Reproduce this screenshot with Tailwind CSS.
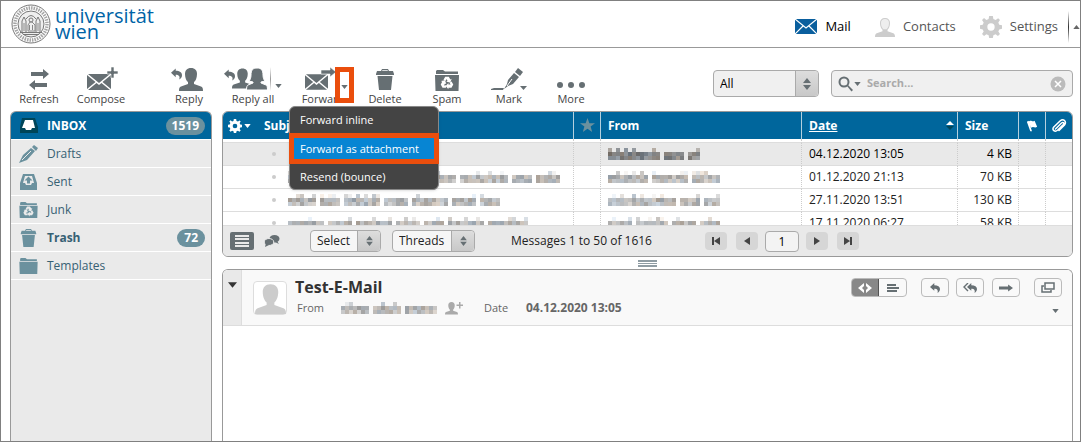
<!DOCTYPE html>
<html lang="en">
<head>
<meta charset="utf-8">
<meta name="viewport" content="width=device-width, initial-scale=1">
<title>Mail :: INBOX</title>
<script src="https://cdn.jsdelivr.net/npm/@tailwindcss/browser@4"></script>
</head>
<body class="bg-white font-['Open_Sans','Noto_Sans',sans-serif] text-xs text-[#222]">
<svg class="hidden" aria-hidden="true">
  <symbol id="person" viewBox="0 0 24 24"><path d="M12 1c4 0 6 2.500 6 6 0 4-1.500 7-3 8v2l7 2.500c1.300.5 2 1.500 2 4.500H0c0-3 .7-4 2-4.500L9 17v-2c-1.500-1-3-4-3-8 0-3.500 2-6 6-6z"/></symbol>
  <symbol id="envelope" viewBox="0 0 24 16"><path d="M1 0h22L12 9zM0 1l8.500 7L0 15zM24 1l-8.500 7L24 15zM9.500 9L12 11l2.500-2L23 16H1z"/></symbol>
  <symbol id="trash" viewBox="0 0 18 21"><path d="M6 0h6l1 2h4l1 3v1H0V5l1-3h4zM6.500 1.200L6 2h6l-.5-.8zM1.500 7h15L15 21H3z"/></symbol>
  <symbol id="folder" viewBox="0 0 24 21"><path d="M1 1l1-1h6l2 1.500h13V4H1zM0 5h24l-.5 16H.5z"/></symbol>
  <symbol id="recycle" viewBox="-8 -8 16 16"><g id="rarrow"><path d="M-3.500-3.200L-1.800-6.200h3.600L3.400-3.600l1.300-.7L3.300-.4-.8-1.200l1.300-.7-1-2L-1.500-2z"/></g><use href="#rarrow" transform="rotate(120)"/><use href="#rarrow" transform="rotate(240)"/></symbol>
  <symbol id="reply" viewBox="0 0 14 14"><path d="M6 0v3c5 0 8 2 8 5.500 0 2.500-1.500 4.500-3.500 5.500 1.300-4-.5-6-4.500-6v3L0 5.500z"/></symbol>
  <symbol id="right" viewBox="0 0 20 10"><path d="M0 3h13V0l7 5-7 5V7H0z"/></symbol>
  <symbol id="down" viewBox="0 0 8 5"><path d="M0 0h8L4 5z"/></symbol>
  <symbol id="updown" viewBox="0 0 8 12"><path d="M4 0l4 5H0zM0 7h8l-4 5z"/></symbol>
  <symbol id="gear" viewBox="-12 -12 24 24"><path fill-rule="evenodd" d="M-2-12h4l.6 3.300 2.500 1L7.800-9.600l2 2L8-5l1 2.500 3 .5v4l-3 .6L8 5l1.800 2.600-2.200 2.200L5 8 2.600 9 2 12h-4l-.6-3L-5 8l-2.600 1.800-2.200-2.200L-8 5l-1-2.400-3-.6v-4l3-.5L-8-5l-1.800-2.600 2.200-2.200L-5-7.700l2.400-1zM0-4a4 4 0 100 8 4 4 0 000-8z"/></symbol>
  <linearGradient id="silver" x1="0" y1="0" x2="0" y2="1"><stop offset="0" stop-color="#eee"/><stop offset="1" stop-color="#b8b8b8"/></linearGradient>
</svg>

<div class="flex min-h-screen flex-col border border-[#808080]">
  <header class="flex h-[47px] shrink-0 items-center border-b border-[#999] pl-2.5">
    <a href="#" class="flex items-center gap-[4px] text-[#0063a6]" aria-label="universität wien">
      <svg class="size-10" viewBox="-20 -20 40 40" fill="none" stroke="#777">
        <circle r="19" stroke-width="1"/><circle r="16" stroke-width="3.500" stroke="#a5a5a5" stroke-dasharray="1.500 1"/><circle r="13" fill="#eee"/>
        <path d="M-9 8V-3l2-4 2 4V8M9 8V-3L7-7 5-3V8M-5-5Q0-12 5-5M-11 8.500H11M-8 10.500H8" />
        <circle cy="-4" r="2"/><path d="M-3 7V1l2-3h2l3 3v6zM-1.500 1v5M1.500 1v5M-7-1v8M7-1v8" stroke="#888"/>
      </svg>
      <span class="text-[20px] leading-4 font-medium">universität<br>wien</span>
    </a>
    <nav class="mt-1.5 ml-auto flex items-center text-[13px] text-[#555]">
      <a href="#" class="flex items-center gap-2 text-black"><svg class="h-[15px] w-[22px]" viewBox="0 0 22 15"><path fill="#0a5f9e" d="M0 0h22v15H0z"/><path d="M0 0l11 9L22 0M0 15l8-8M22 15l-8-8" fill="none" stroke="#fff" stroke-width="1.200"/></svg>Mail</a>
      <a href="#" class="ml-6 flex items-center gap-2"><svg class="size-5" fill="url(#silver)" viewBox="0 0 20 20"><path fill="#ccc" d="M10 1c3.300 0 5 2 5 5 0 3.300-1.200 5.800-2.500 6.700v1.600l5.800 2c1.100.5 1.700 1.300 1.700 3.700H0c0-2.400.6-3.200 1.700-3.700l5.800-2v-1.600C6.200 11.800 5 9.300 5 6c0-3 1.700-5 5-5z"/><path fill="#eee" d="M10 2c2.500 0 4 1.500 4 4 0 3-1.200 5.500-2.500 6.200h-3C7.200 11.500 6 9 6 6c0-2.500 1.500-4 4-4z"/></svg>Contacts</a>
      <a href="#" class="ml-6 flex items-center gap-2"><svg class="size-[22px]" fill="#ccc"><use href="#gear"/></svg>Settings</a>
      <button aria-label="Hide header" class="ml-2.5 flex items-center gap-1"><span class="h-8 w-px bg-linear-to-b from-white via-[#333] to-white"></span><svg class="h-[4px] w-[7px] rotate-180" fill="#666"><use href="#down"/></svg></button>
    </nav>
  </header>

  <div class="relative z-10 flex h-[63px] shrink-0 items-start pt-[18px] pr-[7px] pl-[7px] text-[11px] leading-[14px] text-[#444] [&_svg]:fill-[#666f73]">
    <button class="flex w-[62px] flex-col items-center"><svg class="h-[26px] w-7" viewBox="0 0 28 26"><path d="M6 6h12V3l6 5-6 5v-3H6zM22 17H10v-3l-6 5 6 5v-3h12z"/></svg>Refresh</button>
    <button class="flex w-[62px] flex-col items-center"><svg class="h-[26px] w-9" viewBox="0 0 36 26"><use href="#envelope" x="4" y="8" width="24" height="16"/><path d="M28 1h3v4h4v3h-4v4h-3V8h-4V5h4z" stroke="#fff" stroke-width=".6"/></svg>Compose</button>
    <button class="ml-[26px] flex w-[62px] flex-col items-center"><svg class="h-[26px] w-9" viewBox="0 0 36 26"><use href="#reply" x="0" y="2" width="11" height="12"/><use href="#person" x="8" y="1" width="24" height="24"/></svg>Reply</button>
    <div class="ml-[2px] flex w-[70px]">
      <button class="flex w-[62px] flex-col items-center whitespace-nowrap"><svg class="mr-3.5 h-[26px] w-[44px]" viewBox="0 0 44 26"><use href="#reply" x="0" y="3" width="11" height="12"/><use href="#person" x="8" y="1" width="21" height="22"/><path d="M33 2c4 0 6 2 6 7 0 3 1 5 2 6l-4 1v1l5 2c1 .5 1.500 2 1.500 5H22.500c0-3 .5-4.500 1.500-5l5-2v-1l-4-1c1-1 2-3 2-6 0-5 2-7 6-7z" stroke="#fff"/></svg>Reply all</button>
      <button aria-label="Reply all options" class="-ml-[14px] flex h-[26px] items-center gap-1"><span class="h-6 w-px bg-linear-to-b from-white via-[#999] to-white"></span><svg class="mt-3.5 h-[4px] w-[7px]"><use href="#down"/></svg></button>
    </div>
    <div class="relative w-[62px]">
      <button class="flex w-full flex-col items-center"><svg class="h-[26px] w-9" viewBox="0 0 36 26"><use href="#envelope" x="0" y="8" width="23" height="16"/><path d="M16 4h9V1l6 5-6 5V8h-9z" stroke="#fff" stroke-width=".6"/></svg>Forward</button>
      <button aria-label="Forward options" class="absolute top-[1px] left-[43px] flex h-9 w-[19px] items-center justify-center border-[5px] border-[#ea4e0d] bg-white"><svg class="mt-[3px] h-[4px] w-[7px]"><use href="#down"/></svg></button>
      <ul role="menu" class="absolute top-10 -left-[3px] w-[150px] rounded-md border border-[#888] bg-[#444] text-[11px] font-medium text-white shadow">
        <li class="h-[26px]"><button role="menuitem" class="h-full w-full px-2.5 text-left">Forward inline</button></li>
        <li class="-mx-px h-[31px] border-[5px] border-[#ea4e0d] bg-[#0785d3]"><button role="menuitem" class="h-full w-full px-1.5 text-left whitespace-nowrap">Forward as attachment</button></li>
        <li class="h-[25px]"><button role="menuitem" class="h-full w-full px-2.5 text-left">Resend (bounce)</button></li>
      </ul>
    </div>
    <button class="flex w-[62px] flex-col items-center"><svg class="h-[26px] w-[18px]" viewBox="0 0 18 26"><use href="#trash" y="3" width="18" height="21"/></svg>Delete</button>
    <button class="flex w-[62px] flex-col items-center"><svg class="h-[26px] w-6" viewBox="0 0 24 26"><use href="#folder" y="4" width="24" height="21"/><g class="fill-white"><use href="#recycle" x="4" y="9" width="16" height="16"/></g></svg>Spam</button>
    <button class="flex w-[62px] flex-col items-center"><svg class="h-[26px] w-9" viewBox="0 0 36 26"><path d="M27 2l5 4-3 4-5-4zM23 7l5 4-6 7-5 2-4 3 3-5 1-4zM0 23l3-1h10l-1 2H0zM29 20h7l-3.500 4z"/><path d="M21 13l-5 7" stroke="#fff"/></svg>Mark</button>
    <button class="flex w-[62px] flex-col items-center"><svg class="h-[26px] w-7" viewBox="0 0 28 26"><circle cx="3" cy="19" r="3"/><circle cx="14" cy="19" r="3"/><circle cx="25" cy="19" r="3"/></svg>More</button>

    <div class="mt-1 ml-auto flex gap-3 text-xs">
      <label class="relative block"><span class="sr-only">Filter</span>
        <select class="h-[27px] w-[106px] appearance-none rounded border border-[#aaa] bg-[#f0f0f0] pl-1.5 text-black"><option>All</option></select>
        <span class="pointer-events-none absolute inset-y-px right-px flex w-[23px] items-center justify-center rounded-r border-l border-[#aaa] bg-linear-to-b from-[#ddd] to-[#c8c8c8]"><svg class="h-3 w-2"><use href="#updown"/></svg></span>
      </label>
      <div class="flex h-[27px] w-[242px] items-center rounded border border-[#aaa] bg-[#f0f0f0] px-1.5">
        <button aria-label="Search options" class="flex items-center"><svg class="size-4" viewBox="0 0 16 16"><circle cx="6" cy="6" r="4.500" fill="none" stroke="#666f73" stroke-width="2"/><path d="M9 10l1-1 5 5-1.500 1.500z"/></svg><svg class="h-[4px] w-[7px]"><use href="#down"/></svg></button>
        <input type="text" aria-label="Search" placeholder="Search..." class="ml-1.5 min-w-0 flex-1 bg-transparent text-[11px] font-bold outline-none placeholder:text-[#aaa]">
        <button aria-label="Reset search"><svg class="size-4" viewBox="0 0 16 16"><circle cx="8" cy="8" r="7.500" class="fill-[#bbb]"/><path d="M5 5l6 6M11 5l-6 6" stroke="#fff" stroke-width="1.500"/></svg></button>
      </div>
    </div>
  </div>

  <div class="flex flex-1 gap-2.5 pr-[7px] pl-[9px]">
    <aside class="w-[202px] shrink-0 overflow-hidden rounded-t-md border border-b-0 border-[#999] bg-[#eaeaea]">
      <ul class="text-[#376174] [&_a]:flex [&_a]:h-[27px] [&_a]:items-center [&_a]:gap-[9px] [&_a]:px-2 [&_li]:border-b [&_li]:border-white [&_svg]:h-[18px] [&_svg]:w-[19px] [&_svg]:fill-[#6b919e]">
        <li class="bg-[#00669c] font-bold text-white"><a href="#"><svg viewBox="0 0 19 18"><path class="fill-[#004558]" d="M3 1h13l3 9v6H1v-6z"/><path class="fill-white" d="M6 3h8l2 8h-3l-1 2H7l-1-2H3z"/></svg>INBOX<span class="-mr-0.5 ml-auto rounded-full bg-[#6b919e] px-1.5 text-xs leading-[18px]">1519</span></a></li>
        <li><a href="#"><svg viewBox="0 0 19 18"><path d="M15 0l4 3-2 3-4-4zM12 3l4 3-8 9-8 3 4-8z"/><path d="M3 15l9-9" stroke="#eaeaea"/></svg>Drafts</a></li>
        <li><a href="#"><svg viewBox="0 0 19 18"><path fill-rule="evenodd" d="M4 1h11l3 9v7H1v-7zM6 3L4 10h2l1 2h5l1-2h2l-2-7zM9.500 3.500l4 4H11v3H8v-3H5.500z"/></svg>Sent</a></li>
        <li><a href="#"><svg viewBox="0 0 19 18"><use href="#folder" y="1" width="19" height="16"/><g class="fill-[#eaeaea]"><use href="#recycle" x="3" y="4" width="13" height="13"/></g></svg>Junk</a></li>
        <li class="font-bold"><a href="#"><svg viewBox="0 0 19 18"><use href="#trash" x="1" width="17" height="18"/></svg>Trash<span class="-mr-0.5 ml-auto rounded-full bg-[#6b919e] px-[7px] text-xs leading-[18px] text-white">72</span></a></li>
        <li><a href="#"><svg viewBox="0 0 19 18"><use href="#folder" y="1" width="19" height="16"/></svg>Templates</a></li>
      </ul>
    </aside>

    <main class="flex min-w-0 flex-1 flex-col">
      <section class="overflow-hidden rounded-md border border-[#999] bg-white">
        <div class="h-[113px] overflow-hidden">
          <table class="w-full table-fixed border-separate border-spacing-0 text-[#222] [&_tbody_td]:border-b [&_tbody_td]:border-b-[#ddd] [&_td]:p-0 [&_td+td+td]:border-l [&_td+td+td]:border-dotted [&_td+td+td]:border-l-[#ccc] [&_td+td+td]:[border-bottom-style:solid] [&_th]:p-0 [&_th]:text-left [&_tr]:h-[23px]">
            <colgroup><col class="w-[41px]"><col><col class="w-[27px]"><col class="w-[201px]"><col class="w-[156px]"><col class="w-[61px]"><col class="w-[27px]"><col class="w-[27px]"></colgroup>
            <thead class="bg-[#00669c] text-white">
              <tr class="h-[27px]! [&_th+th+th]:border-l [&_th+th+th]:border-[#b4d0de]">
                <th><button aria-label="List options" class="ml-[5px] flex items-center gap-0.5"><svg class="size-3.5" fill="#fff"><use href="#gear"/></svg><svg class="h-[4px] w-[7px]" fill="#fff"><use href="#down"/></svg></button></th>
                <th>Subject</th>
                <th><svg aria-label="Starred" class="mx-auto size-[15px]" viewBox="0 0 16 16" fill="#6b919e"><path d="M8 0l2 5.500h6L11.300 9 13 15 8 11.500 3 15l1.700-6L0 5.500h6z"/></svg></th>
                <th><span class="pl-[7px]">From</span></th>
                <th><span class="flex items-center justify-between px-[7px]"><a href="#" class="underline">Date</a><svg class="-mr-1 h-[9px] w-2" viewBox="0 0 8 9"><path fill="#fff" d="M4 0l4 4H0z"/><path fill="#004558" d="M0 5h8L4 9z"/></svg></span></th>
                <th><span class="pl-[7px]">Size</span></th>
                <th><svg aria-label="Flag" class="mx-auto size-3" viewBox="0 0 14 14" fill="#fff"><path d="M1 2l2-1 4 12H5zM3 2c3-3 4 1 7-1l3 7c-3 2-4-1-7 1z"/></svg></th>
                <th><svg aria-label="Attachment" class="mx-auto size-4" viewBox="0 0 16 16" fill="none" stroke="#fff" stroke-width="1.500" stroke-linecap="round"><path d="M4.500 11l6-6c2-1.500 3 .3 1.600 1.800L6.500 12.300C4 14.500.5 12 2.800 9L9 3c3.500-3 7 .5 4.500 4L8 12.500"/></svg></th>
              </tr>
            </thead>
            <tbody id="rows"><tr class="h-[4px]! [&_td]:h-[4px]"><td></td><td></td><td></td><td></td><td></td><td></td><td></td><td></td></tr></tbody>
          </table>
        </div>
        <div class="flex h-[31px] items-center border-t border-[#ddd] bg-[#e9e9e9] pl-[7px]">
          <button aria-label="List view" class="flex h-[18px] w-6 items-center justify-center rounded-xs bg-[#666f73]"><svg class="h-3 w-4" fill="#e9e9e9"><path d="M1 0h14v2H1zM1 3h14v2H1zM1 7h14v2H1zM1 10h14v2H1z"/></svg></button>
          <button aria-label="Thread view" class="ml-2.5"><svg class="h-3 w-4" viewBox="0 0 16 12" fill="#666f73"><ellipse cx="10.500" cy="3.800" rx="5" ry="3.800"/><path d="M13 6l2 3-4-2z"/><ellipse cx="5" cy="7" rx="4.800" ry="3.500" stroke="#e9e9e9"/><path d="M2 8l-1 4 4-2z"/></svg></button>
          <label class="relative ml-[30px] block"><span class="sr-only">Select messages</span><select class="block h-[22px] w-[71px] appearance-none rounded border border-[#aaa] bg-[#f6f6f6] pl-1.5 leading-4"><option>Select</option></select><span class="pointer-events-none absolute inset-y-px right-px flex w-[23px] items-center justify-center rounded-r border-l border-[#aaa] bg-linear-to-b from-[#ddd] to-[#c8c8c8]"><svg class="h-2.5 w-[7px]" fill="#666f73"><use href="#updown"/></svg></span></label>
          <label class="relative ml-[11px] block"><span class="sr-only">List mode</span><select class="block h-[22px] w-[83px] appearance-none rounded border border-[#aaa] bg-[#f6f6f6] pl-1.5 leading-4"><option>Threads</option></select><span class="pointer-events-none absolute inset-y-px right-px flex w-[23px] items-center justify-center rounded-r border-l border-[#aaa] bg-linear-to-b from-[#ddd] to-[#c8c8c8]"><svg class="h-2.5 w-[7px]" fill="#666f73"><use href="#updown"/></svg></span></label>
          <span class="ml-9 w-[194px] whitespace-nowrap">Messages 1 to 50 of 1616</span>
          <div class="flex items-center gap-[9px] [&_button]:flex [&_button]:h-[18px] [&_button]:w-[22px] [&_button]:items-center [&_button]:justify-center [&_button]:rounded-sm [&_button]:bg-[#d6d6d6] [&_svg]:h-2 [&_svg]:w-2 [&_svg]:fill-[#444]">
            <button aria-label="First page"><svg viewBox="0 0 8 8"><path d="M0 0h2v8H0zM8 0v8L2 4z"/></svg></button>
            <button aria-label="Previous page"><svg viewBox="0 0 8 8"><path d="M7 0v8L1 4z"/></svg></button>
            <input type="text" aria-label="Page" value="1" class="-mx-[2px] h-[21px] w-[34px] rounded border border-[#aaa] bg-[#f3f3f3] text-center text-black">
            <button aria-label="Next page"><svg viewBox="0 0 8 8"><path d="M1 0v8l6-4z"/></svg></button>
            <button aria-label="Last page"><svg viewBox="0 0 8 8"><path d="M6 0h2v8H6zM0 0v8l6-4z"/></svg></button>
          </div>
        </div>
      </section>

      <div class="flex h-3 items-center justify-center"><svg class="h-[7px] w-[19px]" fill="#8f9ca3"><path d="M0 0h19v2H0zM0 3h19v1H0zM0 5h19v2H0z"/></svg></div>

      <section class="flex-1 overflow-hidden rounded-t-md border border-b-0 border-[#999]">
        <div class="flex h-14 border-b border-[#ddd] bg-[#f9f9f9]">
          <button aria-label="Toggle details" class="flex w-[19px] items-start justify-center border-r border-[#ddd] bg-[#e9e9e9] pt-3"><svg class="h-1.5 w-[9px]" viewBox="0 0 8 5" fill="#333"><path d="M0 0h8L4 5z"/></svg></button>
          <div class="mt-[11px] ml-[11px] flex size-[34px] items-end justify-center rounded-sm border border-[#ddd] bg-white"><svg class="size-[31px]" fill="#ccc"><use href="#person"/></svg></div>
          <div class="ml-2 pt-1.5">
            <h1 class="text-base leading-[22px] font-bold text-[#333]">Test-E-Mail</h1>
            <div class="flex h-5 items-center pl-0.5 text-[11px] text-[#666]"><span class="w-[44px]">From</span><svg data-seed="5" data-cols="24" role="img" aria-label="Sender" class="h-3 w-[98px]"></svg>
              <button aria-label="Add to contacts" class="ml-1.5"><svg class="h-3.5 w-[18px]" viewBox="0 0 18 14" fill="#aaa"><use href="#person" width="13" height="14"/><path d="M14 1h1.500v2.500H18V5h-2.500v2.500H14V5h-2.500V3.500H14z"/></svg></button>
              <span class="ml-[21px] w-[42px]">Date</span><span class="text-xs font-bold">04.12.2020 13:05</span></div>
          </div>
          <div class="ml-auto flex flex-col items-end pt-2 pr-2.5 [&_button]:flex [&_button]:items-center [&_button]:justify-center [&_svg]:fill-[#666f73]">
            <div class="flex h-[19px] *:rounded *:border *:border-[#bbb]">
              <div class="mr-[14px] flex w-[56px] overflow-hidden"><button aria-label="HTML" class="w-[27px] border-r border-[#555] bg-[#888]"><svg class="h-2.5 w-3.5" viewBox="0 0 14 10"><path class="fill-white" d="M6 0v3L4 5l2 2v3L0 5zM8 0v3l2 2-2 2v3l6-5z"/></svg></button><button aria-label="Plain text" class="flex-1"><svg class="h-2 w-3"><path d="M0 0h9v2H0zM0 3h12v2H0zM0 6h10v2H0z"/></svg></button></div>
              <button aria-label="Reply" class="mr-[7px] w-7"><svg class="size-2.5"><use href="#reply"/></svg></button>
              <button aria-label="Reply all" class="mr-2 w-7"><svg class="h-2.5 w-3.5" viewBox="0 0 14 10"><use href="#reply" x="4" width="10" height="10"/><path d="M5 0L1 4l4 4" fill="none" stroke="#666f73" stroke-width="1.400"/></svg></button>
              <button aria-label="Forward" class="mr-[14px] w-7"><svg class="h-2 w-[14px]"><use href="#right"/></svg></button>
              <button aria-label="Open in new window" class="w-7"><svg class="h-3 w-3.5" viewBox="0 0 14 12"><g fill="none" stroke="#666f73" stroke-width="1.500"><path d="M4 1h9v6H4zM3 4H1v6h9V8"/></g></svg></button>
            </div>
            <button aria-label="More" class="mt-3 mr-[3px]"><svg class="h-[4px] w-[7px]"><use href="#down"/></svg></button>
          </div>
        </div>
      </section>
    </main>
  </div>
</div>

<script>
// Message list: date, size, widths (in mosaic cells) of the masked subject and sender
const messages = [
  ['04.12.2020 13:05', '4 KB', 0, 23],
  ['01.12.2020 21:13', '70 KB', 68, 28],
  ['27.11.2020 13:51', '130 KB', 53, 28],
  ['17.11.2020 06:27', '58 KB', 61, 28],
];
document.getElementById('rows').innerHTML += messages.map(([date, size, s, f], i) => `
  <tr class="${i === 0 ? 'bg-[#e9e9e9] text-black' : ''}">
    <td></td>
    <td><div class="flex items-center gap-3 pl-2"><span class="size-1 shrink-0 rounded-full bg-[#ccc]"></span>${s ? `<svg data-seed="${i + 10}" data-cols="${s}" role="img" aria-label="Subject" class="h-3 w-[280px]"></svg>` : ''}</div></td>
    <td></td>
    <td><svg data-seed="${i + 20}" data-cols="${f}" ${i ? '' : 'data-dark="50"'} role="img" aria-label="Sender" class="ml-[7px] h-3 w-[120px]"></svg></td>
    <td><span class="pl-[7px] whitespace-nowrap">${date}</span></td>
    <td><span class="block pr-1.5 text-right whitespace-nowrap">${size}</span></td>
    <td></td><td></td>
  </tr>`).join('');

// Masked names are drawn as a mosaic of 4px cells
document.querySelectorAll('svg[data-seed]').forEach(svg => {
  let n = +svg.dataset.seed * 7919;
  const rnd = () => (n = (n * 48271) % 2147483647) / 2147483647;
  const dark = +(svg.dataset.dark || 0);
  rnd(); rnd();
  let out = '', last = 0;
  for (let c = 0; c < +svg.dataset.cols; c++) {
    if (c - last > 5 && rnd() < .2) { last = c; continue; }
    const tall = rnd() < .3;
    [220, 180, 188].forEach((base, r) => {
      if (r === 0 && !tall) return;
      const v = Math.round(base - dark + (rnd() - .5) * 50), t = Math.round((rnd() - .5) * 20);
      out += `<rect x="${c * 4}" y="${r * 4}" width="4" height="4" fill="rgb(${v + t},${v},${v - t})"/>`;
    });
  }
  svg.innerHTML = out;
});
</script>
</body>
</html>
